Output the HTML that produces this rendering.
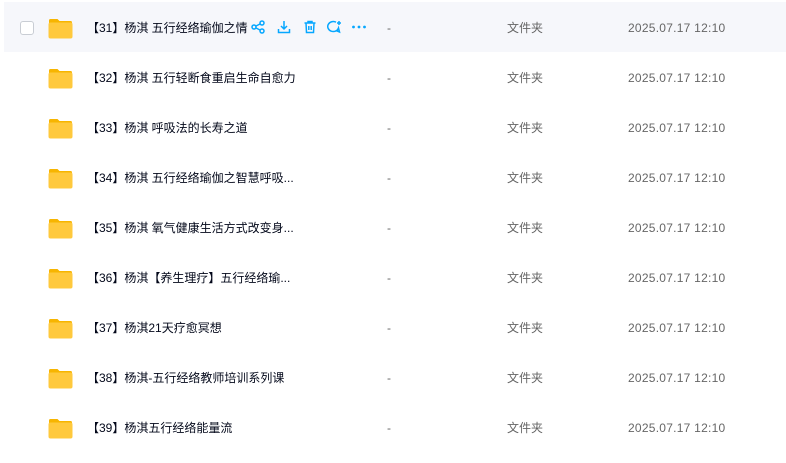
<!DOCTYPE html><html><head><meta charset="utf-8"><style>
body{margin:0;width:786px;height:463px;background:#fff;font-family:"Liberation Sans","Noto Sans CJK SC",sans-serif;overflow:hidden;position:relative}
.row{position:absolute;left:4px;width:782px;height:50px}
.row.h{background:#f6f7fb}
.cb{position:absolute;left:16px;top:19px;width:12px;height:12px;border:1px solid #c9cdd4;border-radius:3px;background:#fff}
.fd{position:absolute;left:44px;top:16px;width:25px;height:21px}
.nm{position:absolute;left:83px;top:1px;line-height:50px;font-size:12px;color:#03081a}
.ds{position:absolute;left:383px;top:1px;line-height:50px;font-size:12px;color:#666}
.tp{position:absolute;left:503px;top:1px;line-height:50px;font-size:12px;color:#666}
.dt{position:absolute;left:624px;top:1px;line-height:50px;font-size:12px;color:#666;letter-spacing:0.25px}
.ic{position:absolute;top:18px}
</style></head><body>
<div id="c"></div>
<script>
const names=["【31】杨淇 五行经络瑜伽之情","【32】杨淇 五行轻断食重启生命自愈力","【33】杨淇 呼吸法的长寿之道","【34】杨淇 五行经络瑜伽之智慧呼吸...","【35】杨淇 氧气健康生活方式改变身...","【36】杨淇【养生理疗】五行经络瑜...","【37】杨淇21天疗愈冥想","【38】杨淇-五行经络教师培训系列课","【39】杨淇五行经络能量流"];
let h="";
const fold='<svg class="fd" viewBox="0 0 25 21"><path d="M1 2.5Q1 1 2.5 1H9.5L11.5 3H22.5Q24 3 24 4.5V8H1Z" fill="#f7b500"/><rect x="0.5" y="4.5" width="24" height="16" rx="2" fill="#ffc93d"/></svg>';
names.forEach((n,i)=>{
 const t=2+i*50;
 h+=`<div class="row${i==0?' h':''}" style="top:${t}px">${i==0?'<div class="cb"></div>':''}${fold}<div class="nm">${n}</div><div class="ds">-</div><div class="tp">文件夹</div><div class="dt">2025.07.17 12:10</div>`;
 if(i==0){h+=`<svg class="ic" style="left:247px" width="14" height="14" viewBox="0 0 14 14" fill="none" stroke="#06a7ff" stroke-width="1.5"><circle cx="3" cy="7" r="2"/><circle cx="11" cy="3" r="2"/><circle cx="11" cy="11" r="2"/><path d="M5 6L9 4M5 8L9 10"/></svg>
<svg class="ic" style="left:273px" width="14" height="14" viewBox="0 0 14 14" fill="none" stroke="#06a7ff" stroke-width="1.5"><path d="M7 1V9M4 6L7 9L10 6M1.5 9V12.5H12.5V9"/></svg>
<svg class="ic" style="left:299px" width="14" height="14" viewBox="0 0 14 14" fill="none" stroke="#06a7ff" stroke-width="1.5"><path d="M1.5 3H12.5M5 3V1.5H9V3M3 3L3.5 12.5H10.5L11 3M5.8 6V10M8.2 6V10"/></svg>
<svg class="ic" style="left:323px" width="15" height="14" viewBox="0 0 15 14" fill="none" stroke="#06a7ff" stroke-width="1.5"><path d="M9 2.2A5.5 5 0 1 0 11.5 8L12.5 12L9 10.5"/><path d="M12 1V5M10 3H14"/></svg>
<svg class="ic" style="left:347px" width="16" height="14" viewBox="0 0 16 14" fill="#06a7ff"><circle cx="2.5" cy="7" r="1.4"/><circle cx="8" cy="7" r="1.4"/><circle cx="13.5" cy="7" r="1.4"/></svg>`}
 h+='</div>';
});
document.getElementById("c").innerHTML=h;
</script>
</body></html>
